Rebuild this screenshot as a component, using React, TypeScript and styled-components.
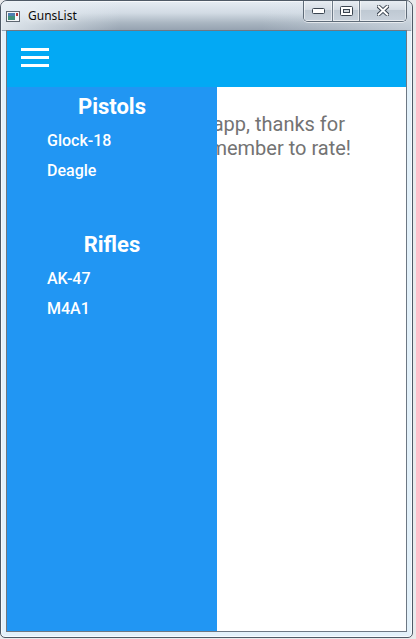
import React from "react";
import styled, { createGlobalStyle } from "styled-components";

const GlobalStyle = createGlobalStyle`
  html, body { margin: 0; padding: 0; }
  body {
    background: #e9eaec;
    width: 416px;
    height: 639px;
    overflow: hidden;
  }
  #root { width: 416px; height: 639px; }
`;

const Window = styled.div`
  box-sizing: border-box;
  width: 413px;
  height: 638px;
  border: 1px solid #4f5a66;
  border-radius: 7px 7px 5px 5px;
  background:
    linear-gradient(180deg, rgba(255,255,255,0) 0px, rgba(255,255,255,0) 30px, #e3f1fa 30px),
    linear-gradient(180deg, #e6edf3 0px, #d2dbe4 12px, #a9b5c1 22px, #96a3b1 29px);
  display: flex;
  flex-direction: column;
  box-shadow: inset 0 0 0 1px rgba(255,255,255,0.7);
  overflow: hidden;
`;

const TitleBar = styled.div`
  height: 29px;
  display: flex;
  align-items: flex-start;
  padding-left: 5px;
  background: linear-gradient(90deg, rgba(235,241,246,0.85) 0px, rgba(235,241,246,0) 120px, rgba(235,241,246,0) 260px, rgba(220,228,236,0.6) 412px);
`;

const AppIcon = styled.svg`
  margin-top: 10px;
  width: 14px;
  height: 11px;
  flex: none;
`;

const Title = styled.span`
  margin-left: 8px;
  margin-top: 7px;
  font-family: "Noto Sans", "Open Sans", sans-serif;
  font-size: 12px;
  line-height: 16px;
  color: #0b0b0b;
  text-shadow: 0 0 6px rgba(255,255,255,0.9);
`;

const Caption = styled.div`
  margin-left: auto;
  margin-top: -1px;
  margin-right: 5px;
  display: flex;
  height: 21px;
  border: 1px solid #5f6b78;
  border-top: none;
  border-radius: 0 0 5px 5px;
  overflow: hidden;
  box-shadow: 0 1px 0 rgba(255,255,255,0.6);
`;

const CapButton = styled.div<{ $w: number; $last?: boolean }>`
  width: ${(p) => p.$w}px;
  height: 100%;
  display: flex;
  align-items: center;
  justify-content: center;
  background: linear-gradient(180deg, #e9eef3 0%, #d6dde5 45%, #bfc9d3 50%, #c9d2dc 100%);
  border-right: ${(p) => (p.$last ? "none" : "1px solid #6f7b88")};
  box-shadow: inset 0 0 0 1px rgba(255,255,255,0.55);
`;

const Client = styled.div`
  margin: 0 5px 5px 5px;
  flex: 1;
  border: 1px solid #6d7884;
  display: flex;
  flex-direction: column;
  background: #ffffff;
  min-height: 0;
`;

const Header = styled.div`
  height: 56px;
  background: #03a9f4;
  display: flex;
  flex-direction: column;
  align-items: flex-start;
  padding: 17px 0 0 14px;
  box-sizing: border-box;
  flex: none;
`;

const Burger = styled.div`
  display: flex;
  flex-direction: column;
  gap: 5px;
`;

const BurgerLine = styled.span`
  display: block;
  width: 28px;
  height: 3px;
  background: #ffffff;
`;

const Body = styled.div`
  flex: 1;
  display: grid;
  grid-template-columns: 1fr;
  grid-template-rows: 1fr;
  min-height: 0;
  overflow: hidden;
`;

const Content = styled.div`
  grid-area: 1 / 1;
  padding: 25px 0 0 62px;
  font-family: Roboto, "Liberation Sans", sans-serif;
  font-size: 20px;
  line-height: 24px;
  color: #737373;
  white-space: nowrap;
`;

const Drawer = styled.nav`
  grid-area: 1 / 1;
  z-index: 1;
  width: 210px;
  background: #2196f3;
  display: flex;
  flex-direction: column;
  gap: 46px;
  padding-top: 7px;
  box-sizing: border-box;
  font-family: Roboto, "Liberation Sans", sans-serif;
  color: #ffffff;
`;

const Section = styled.section`
  display: flex;
  flex-direction: column;
`;

const Heading = styled.h2`
  margin: 0 0 6px 0;
  font-size: 22px;
  line-height: 26px;
  font-weight: 700;
  text-align: center;
`;

const Item = styled.div`
  font-size: 16px;
  line-height: 30px;
  font-weight: 500;
  padding-left: 40px;
`;

const groups = [
  { title: "Pistols", items: ["Glock-18", "Deagle"] },
  { title: "Rifles", items: ["AK-47", "M4A1"] },
];

export default function App() {
  return (
    <>
      <GlobalStyle />
      <Window>
        <TitleBar>
          <AppIcon viewBox="0 0 14 11">
            <rect x="0.5" y="0.5" width="13" height="10" fill="#f4f6f8" stroke="#5d6670" />
            <rect x="2" y="2" width="7" height="7" fill="#3f8f7a" />
            <rect x="2" y="2" width="7" height="3" fill="#4d7fb0" />
            <rect x="10" y="2" width="2" height="3" fill="#b03838" />
          </AppIcon>
          <Title>GunsList</Title>
          <Caption>
            <CapButton $w={28}>
              <svg width="13" height="6" viewBox="0 0 13 6">
                <rect x="0.5" y="0.5" width="12" height="5" rx="1" fill="#ffffff" stroke="#3a4450" />
              </svg>
            </CapButton>
            <CapButton $w={26}>
              <svg width="13" height="10" viewBox="0 0 13 10">
                <rect x="0.5" y="0.5" width="12" height="9" rx="1" fill="#ffffff" stroke="#3a4450" />
                <rect x="3.5" y="3.5" width="6" height="3" fill="#cfd6dd" stroke="#3a4450" />
              </svg>
            </CapButton>
            <CapButton $w={46} $last>
              <svg width="12" height="11" viewBox="0 0 12 11">
                <path
                  d="M1 1 L11 10 M11 1 L1 10"
                  stroke="#3a4450"
                  strokeWidth="4"
                  strokeLinecap="round"
                />
                <path
                  d="M1.5 1.3 L10.5 9.7 M10.5 1.3 L1.5 9.7"
                  stroke="#ffffff"
                  strokeWidth="2"
                  strokeLinecap="round"
                />
              </svg>
            </CapButton>
          </Caption>
        </TitleBar>
        <Client>
          <Header>
            <Burger>
              <BurgerLine />
              <BurgerLine />
              <BurgerLine />
            </Burger>
          </Header>
          <Body>
            <Content>
              Welcome to the app, thanks for
              <br />
              downloading, remember to rate!
            </Content>
            <Drawer>
              {groups.map((g) => (
                <Section key={g.title}>
                  <Heading>{g.title}</Heading>
                  {g.items.map((it) => (
                    <Item key={it}>{it}</Item>
                  ))}
                </Section>
              ))}
            </Drawer>
          </Body>
        </Client>
      </Window>
    </>
  );
}
